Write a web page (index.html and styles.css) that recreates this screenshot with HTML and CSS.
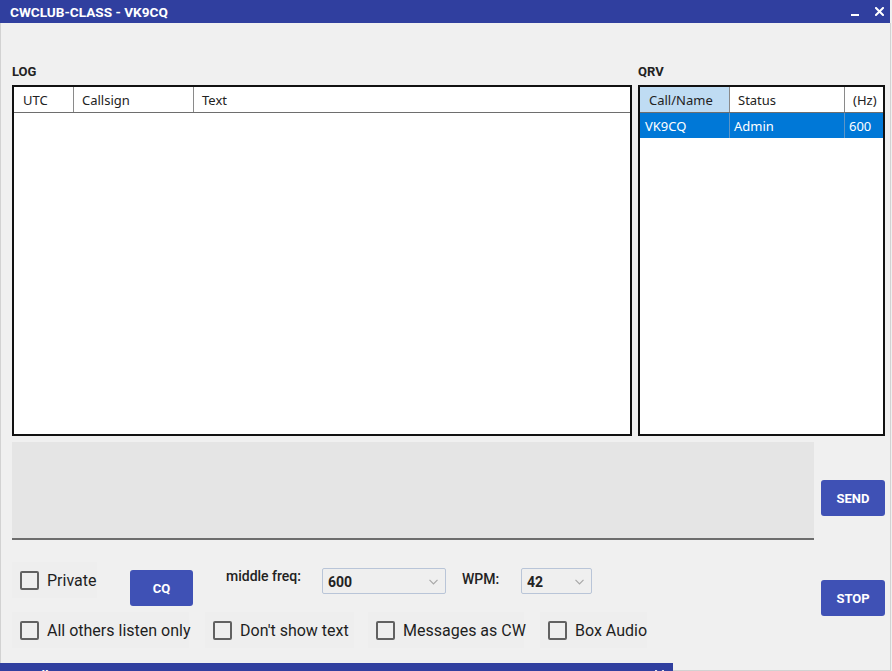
FILE: index.html
```html
<!DOCTYPE html>
<html lang="en">
<head>
<meta charset="utf-8">
<title>CWCLUB-CLASS - VK9CQ</title>
<link rel="stylesheet" href="styles.css">
</head>
<body>
<div class="window">
  <header class="titlebar">
    <span class="title">CWCLUB-CLASS - VK9CQ</span>
    <div class="win-controls">
      <span class="win-min"></span>
      <svg class="win-close" width="9" height="9" viewBox="0 0 9 9" aria-hidden="true">
        <path d="M1 1 L8 8 M8 1 L1 8" stroke="#fff" stroke-width="2" stroke-linecap="square"/>
      </svg>
    </div>
  </header>

  <main class="content">
    <div class="panes">
      <section class="pane">
        <h2 class="pane-label">LOG</h2>
        <div class="grid">
          <div class="grid-row grid-head log-cols">
            <div class="cell cell-utc">UTC</div>
            <div class="cell">Callsign</div>
            <div class="cell cell-last">Text</div>
          </div>
        </div>
      </section>

      <section class="pane">
        <h2 class="pane-label">QRV</h2>
        <div class="grid">
          <div class="grid-row grid-head qrv-cols">
            <div class="cell cell-sorted">Call/Name</div>
            <div class="cell">Status</div>
            <div class="cell cell-last">(Hz)</div>
          </div>
          <div class="grid-row grid-item selected qrv-cols">
            <div class="cell">VK9CQ</div>
            <div class="cell">Admin</div>
            <div class="cell cell-last">600</div>
          </div>
        </div>
      </section>
    </div>

    <div class="lower">
      <div class="compose">
        <div class="message-box"></div>

        <div class="options options-top">
          <label class="check check-private">
            <span class="check-box"></span>
            <span class="check-text">Private</span>
          </label>
          <button class="btn btn-cq" type="button">CQ</button>
          <span class="field-label label-freq">middle freq:</span>
          <div class="select select-freq">
            <span class="select-value">600</span>
            <svg class="chevron" width="9" height="6" viewBox="0 0 9 6" aria-hidden="true">
              <path d="M0.5 0.8 L4.5 4.8 L8.5 0.8" fill="none" stroke="#a8a8a8" stroke-width="1.2"/>
            </svg>
          </div>
          <span class="field-label label-wpm">WPM:</span>
          <div class="select select-wpm">
            <span class="select-value">42</span>
            <svg class="chevron" width="9" height="6" viewBox="0 0 9 6" aria-hidden="true">
              <path d="M0.5 0.8 L4.5 4.8 L8.5 0.8" fill="none" stroke="#a8a8a8" stroke-width="1.2"/>
            </svg>
          </div>
        </div>

        <div class="options options-bottom">
          <label class="check check-listen">
            <span class="check-box"></span>
            <span class="check-text">All others listen only</span>
          </label>
          <label class="check check-hide">
            <span class="check-box"></span>
            <span class="check-text">Don't show text</span>
          </label>
          <label class="check check-cw">
            <span class="check-box"></span>
            <span class="check-text">Messages as CW</span>
          </label>
          <label class="check check-audio">
            <span class="check-box"></span>
            <span class="check-text">Box Audio</span>
          </label>
        </div>
      </div>

      <div class="actions">
        <button class="btn btn-send" type="button">SEND</button>
        <button class="btn btn-stop" type="button">STOP</button>
      </div>
    </div>
  </main>
</div>

<div class="subwindow">
  <span class="title">Recall</span>
  <svg class="win-close" width="9" height="9" viewBox="0 0 9 9" aria-hidden="true">
    <path d="M1 1 L8 8 M8 1 L1 8" stroke="#fff" stroke-width="2" stroke-linecap="square"/>
  </svg>
</div>
</body>
</html>
```

FILE: styles.css
```css
html,
body {
  margin: 0;
  height: 671px;
  overflow: hidden;
  background: #f0f0f0;
}

body {
  position: relative;
  font-family: Roboto, "Noto Sans", sans-serif;
  color: #1f1f1f;
}

/* ---------- main window ---------- */

.window {
  width: 891px;
  height: 671px;
  display: flex;
  flex-direction: column;
}

.titlebar {
  width: 890px;
  height: 23px;
  flex: none;
  box-sizing: border-box;
  padding: 0 6px 0 10px;
  background: #303f9f;
  color: #fff;
  display: flex;
  align-items: center;
}

.title {
  flex: 1;
  font-weight: 700;
  font-size: 13.6px;
  padding-top: 1px;
  white-space: nowrap;
}

.win-controls {
  display: flex;
  align-items: center;
}

.win-min {
  width: 8px;
  height: 2px;
  background: #fff;
  margin-top: 7px;
  margin-right: 16px;
}

.win-close {
  display: block;
}

.content {
  flex: 1;
  box-sizing: border-box;
  border: 1px solid #d2d2d2;
  border-top: 0;
  padding: 41px 0 0 11px;
}

/* ---------- data grids ---------- */

.panes {
  display: grid;
  grid-template-columns: 620px 247px;
  column-gap: 6px;
}

.pane-label {
  margin: 0 0 6px;
  font-size: 13px;
  line-height: 15px;
  font-weight: 700;
  color: #222;
}

.grid {
  height: 351px;
  box-sizing: border-box;
  border: 2px solid #111;
  background: #fff;
  font-family: "Noto Sans", Roboto, sans-serif;
  font-size: 13px;
}

.grid-row {
  display: grid;
  height: 25px;
}

.log-cols {
  grid-template-columns: 60px 120px 1fr;
}

.qrv-cols {
  grid-template-columns: 90px 115px 1fr;
}

.cell {
  display: flex;
  align-items: center;
  padding-left: 8px;
  border-right: 1px solid #8a8a8a;
  white-space: nowrap;
  overflow: hidden;
}

.cell-last {
  border-right: 0;
}

.grid-head {
  height: 26px;
  box-sizing: border-box;
  border-bottom: 1px solid #6e6e6e;
  color: #222;
}

.grid-head .cell-utc {
  padding-left: 9px;
}

.grid-head .cell-sorted {
  background: #bfdcf3;
  padding-left: 9px;
}

.grid-item .cell {
  padding-left: 4px;
}

.grid-item .cell:first-child {
  padding-left: 5px;
}

.selected {
  background: #0078d7;
  color: #fff;
}

.selected .cell {
  border-right-color: #5d95c6;
}

/* ---------- compose area ---------- */

.lower {
  display: grid;
  grid-template-columns: 802px 64px;
  column-gap: 7px;
  margin-top: 6px;
}

.message-box {
  height: 96px;
  background: #e5e5e5;
  border-bottom: 2px solid #6d6d6d;
}

.options {
  display: flex;
  align-items: flex-start;
  height: 36px;
}

.options-top {
  margin-top: 22px;
}

.options-bottom {
  margin-top: 14px;
}

.check {
  height: 36px;
  box-sizing: border-box;
  display: flex;
  align-items: center;
  gap: 8px;
  padding-left: 8px;
  background: #eeeeee;
  font-size: 16px;
  color: #1e1e1e;
  white-space: nowrap;
  flex: none;
}

.check-private {
  width: 85px;
}

.check-listen {
  width: 177px;
}

.check-hide {
  width: 149px;
  margin-left: 16px;
}

.check-cw {
  width: 156px;
  margin-left: 14px;
}

.check-audio {
  width: 107px;
  margin-left: 16px;
}

.check-box {
  width: 19px;
  height: 19px;
  flex: none;
  box-sizing: border-box;
  border: 2px solid #616161;
  border-radius: 2px;
}

.field-label {
  font-size: 14px;
  line-height: 17px;
  font-weight: 500;
  color: #222;
  white-space: nowrap;
}

.label-freq {
  width: 77px;
  margin: 6px 0 0 33px;
}

.label-wpm {
  width: 36px;
  margin: 9px 0 0 16px;
}

.select {
  height: 26px;
  box-sizing: border-box;
  border: 1px solid #b9c5d8;
  border-radius: 2px;
  background: #efefef;
  display: flex;
  align-items: center;
  justify-content: space-between;
  padding: 1px 7px 0 5px;
  margin-top: 6px;
  font-size: 14px;
  font-weight: 700;
  color: #222;
  flex: none;
}

.select-freq {
  width: 124px;
  margin-left: 19px;
}

.select-wpm {
  width: 71px;
  margin-left: 23px;
}

.chevron {
  display: block;
}

/* ---------- buttons ---------- */

.btn {
  display: block;
  flex: none;
  border: 0;
  border-radius: 3px;
  background: #3f51b5;
  color: #fff;
  font-family: Roboto, "Noto Sans", sans-serif;
  font-size: 13px;
  font-weight: 700;
  padding: 0;
  height: 36px;
}

.btn-cq {
  width: 63px;
  margin: 8px 0 0 33px;
}

.actions {
  display: flex;
  flex-direction: column;
}

.btn-send {
  width: 64px;
  margin-top: 38px;
}

.btn-stop {
  width: 64px;
  margin-top: 64px;
}

/* ---------- second window, overlapping the bottom edge ---------- */

.subwindow {
  position: absolute;
  left: 0;
  top: 663px;
  width: 673px;
  height: 23px;
  box-sizing: border-box;
  padding: 0 9px 0 11px;
  background: #303f9f;
  color: #fff;
  display: flex;
  align-items: center;
}
```
